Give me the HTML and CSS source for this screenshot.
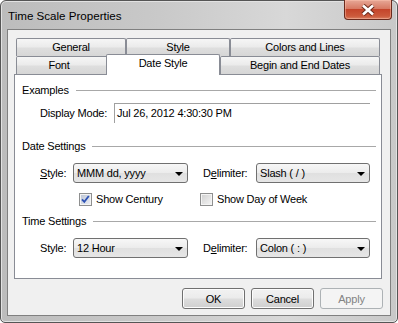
FILE: index.html
```html
<!DOCTYPE html>
<html lang="en">
<head>
  <meta charset="UTF-8">
  <title>Time Scale Properties</title>
  <link rel="stylesheet" href="styles.css">
</head>
<body>
  <div class="window">
    <div class="titlebar">
      <span class="title">Time Scale Properties</span>
      <div class="close-btn">
        <svg width="16" height="12" viewBox="0 0 16 12">
          <path d="M3 1.5 L13 10.5 M13 1.5 L3 10.5" stroke="#6b2a1c" stroke-width="4.6" fill="none"/>
          <path d="M3 1.5 L13 10.5 M13 1.5 L3 10.5" stroke="#fff" stroke-width="2.6" fill="none"/>
        </svg>
      </div>
    </div>

    <div class="client">
      <div class="tabs">
        <div class="tab-row">
          <div class="tab tab-general">General</div>
          <div class="tab tab-style">Style</div>
          <div class="tab tab-colors">Colors and Lines</div>
        </div>
        <div class="tab-row">
          <div class="tab tab-font">Font</div>
          <div class="tab tab-date active">Date Style</div>
          <div class="tab tab-dates">Begin and End Dates</div>
        </div>
      </div>

      <div class="panel">
        <div class="group-head"><span>Examples</span><i></i></div>
        <div class="row row-display">
          <span class="lbl lbl-display">Display Mode:</span>
          <div class="field">Jul 26, 2012 4:30:30 PM</div>
        </div>

        <div class="group-head head-date"><span>Date Settings</span><i></i></div>
        <div class="row row-combo">
          <span class="lbl lbl-style"><u>S</u>tyle:</span>
          <div class="combo combo-left"><span>MMM dd, yyyy</span><b class="arrow"></b></div>
          <span class="lbl lbl-delim">D<u>e</u>limiter:</span>
          <div class="combo combo-right"><span>Slash ( / )</span><b class="arrow"></b></div>
        </div>
        <div class="row row-check">
          <label class="check check-century">
            <span class="box checked">
              <svg width="11" height="11" viewBox="0 0 11 11">
                <path d="M2 5.3 L4.3 7.8 L8.8 2" stroke="#2d52b4" stroke-width="1.8" fill="none"/>
              </svg>
            </span>
            Show Century
          </label>
          <label class="check">
            <span class="box"></span>
            Show Day of Week
          </label>
        </div>

        <div class="group-head head-time"><span>Time Settings</span><i></i></div>
        <div class="row row-combo">
          <span class="lbl lbl-style">Style:</span>
          <div class="combo combo-left"><span>12 Hour</span><b class="arrow"></b></div>
          <span class="lbl lbl-delim">D<u>e</u>limiter:</span>
          <div class="combo combo-right"><span>Colon ( : )</span><b class="arrow"></b></div>
        </div>
      </div>

      <div class="buttons">
        <button class="btn">OK</button>
        <button class="btn">Cancel</button>
        <button class="btn disabled">Apply</button>
      </div>
    </div>
  </div>
</body>
</html>
```

FILE: styles.css
```css
body {
  margin: 0;
  font-family: "Liberation Sans", Arial, sans-serif;
  font-size: 11px;
  letter-spacing: -0.2px;
  color: #000;
  background: #fff;
}

.window {
  width: 398px;
  height: 323px;
  box-sizing: border-box;
  border: 1px solid #555;
  border-radius: 6px 6px 5px 5px;
  background: linear-gradient(90deg, #bcbcbc, #c9c9c9 40%, #d8d8d8 72%, #c8c8c8);
  box-shadow: inset 0 0 0 1px #e2e2e2;
}

.titlebar {
  height: 28px;
  display: flex;
  align-items: center;
}

.title {
  padding-left: 7px;
  font-size: 11.6px;
  letter-spacing: 0;
  margin-top: 1px;
}

.close-btn {
  margin-left: auto;
  margin-right: 5px;
  align-self: flex-start;
  margin-top: -1px;
  width: 48px;
  height: 20px;
  box-sizing: border-box;
  border: 1px solid #6a2a1d;
  border-top: none;
  border-radius: 0 0 4px 4px;
  background: linear-gradient(#e7a897, #d77a64 45%, #c4452b 50%, #cc5a3c 85%, #d98063);
  display: flex;
  align-items: center;
  justify-content: center;
  box-shadow: inset 0 0 0 1px rgba(255, 200, 180, 0.45);
}

.client {
  margin: 0 6px;
  height: 287px;
  box-sizing: border-box;
  border: 1px solid #808080;
  background: #f0f0f0;
  padding: 8px 8px 0 6px;
}

/* tabs */
.tabs {
  margin-left: 2px;
  width: 364px;
}

.tab-row {
  display: flex;
  align-items: flex-start;
  height: 18px;
}

.tab {
  height: 18px;
  box-sizing: border-box;
  border: 1px solid #898c95;
  border-bottom: none;
  border-radius: 2px 2px 0 0;
  background: linear-gradient(#f6f6f6, #ebebeb 45%, #dedede 55%, #d6d6d6);
  text-align: center;
  line-height: 17px;
}

.tab-general { width: 110px; }
.tab-style { width: 104px; }
.tab-colors { width: 150px; }
.tab-font { width: 92px; padding-right: 6px; }
.tab-date { width: 114px; }
.tab-dates { width: 160px; }

.tab.active {
  background: #fff;
  height: 21px;
  margin-top: -2px;
  margin-left: -2px;
  margin-bottom: -1px;
  z-index: 2;
}

/* panel */
.panel {
  width: 368px;
  height: 205px;
  box-sizing: border-box;
  border: 1px solid #898c95;
  background: #fff;
  padding: 9px 5px 0 7px;
}

.group-head {
  display: flex;
  align-items: center;
  height: 13px;
  line-height: 13px;
}

.group-head i {
  flex: 1;
  height: 1px;
  margin-left: 7px;
  background: #a8a8a8;
}

.head-date { margin-top: 17px; }
.head-time { margin-top: 9px; }

.row {
  display: flex;
  align-items: center;
  padding-left: 18px;
}

.row-display {
  margin-top: 6px;
  height: 20px;
}

.lbl-display { width: 74px; }

.field {
  width: 256px;
  height: 20px;
  box-sizing: border-box;
  border-top: 1px solid #a0a0a0;
  border-left: 1px solid #a0a0a0;
  padding-left: 2px;
  line-height: 19px;
}

.row-combo {
  margin-top: 10px;
  height: 20px;
}

.lbl-style { width: 33px; }
.lbl-delim { width: 53px; margin-left: 15px; }

.combo {
  height: 20px;
  box-sizing: border-box;
  border: 1px solid #707070;
  border-radius: 3px;
  background: linear-gradient(#f7f7f7, #ececec 48%, #e0e0e0 52%, #e6e6e6);
  display: flex;
  align-items: center;
  padding: 0 4px 0 3px;
}

.combo span { flex: 1; }

.combo-left { width: 115px; }
.combo-right { width: 114px; }

.arrow {
  width: 0;
  height: 0;
  border-left: 4px solid transparent;
  border-right: 4px solid transparent;
  border-top: 4px solid #000;
  margin-top: 1px;
}

.row-check {
  margin-top: 10px;
  height: 13px;
  padding-left: 57px;
}

.check {
  display: flex;
  align-items: center;
  gap: 4px;
  line-height: 13px;
}

.check-century { width: 121px; }

.box {
  width: 13px;
  height: 13px;
  box-sizing: border-box;
  border: 1px solid #8e8f8f;
  background: linear-gradient(135deg, #cfcfcf, #f6f6f6);
  box-shadow: inset 0 0 0 1px #f4f4f4;
  display: flex;
  align-items: center;
  justify-content: center;
}

.box.checked {
  background: linear-gradient(135deg, #b9c2d3, #eef0f5);
}

/* buttons */
.buttons {
  display: flex;
  justify-content: flex-end;
  gap: 6px;
  margin-top: 9px;
  margin-right: -1px;
}

.btn {
  width: 63px;
  height: 21px;
  box-sizing: border-box;
  border: 1px solid #707070;
  border-radius: 3px;
  background: linear-gradient(#f2f2f2, #ebebeb 48%, #dddddd 52%, #cfcfcf);
  box-shadow: inset 0 0 0 1px #fcfcfc;
  font-family: "Liberation Sans", Arial, sans-serif;
  font-size: 11px;
  letter-spacing: -0.2px;
  color: #000;
  padding: 0;
}

.btn.disabled {
  border-color: #adb2b5;
  background: #f4f4f4;
  box-shadow: none;
  color: #838383;
}
```
